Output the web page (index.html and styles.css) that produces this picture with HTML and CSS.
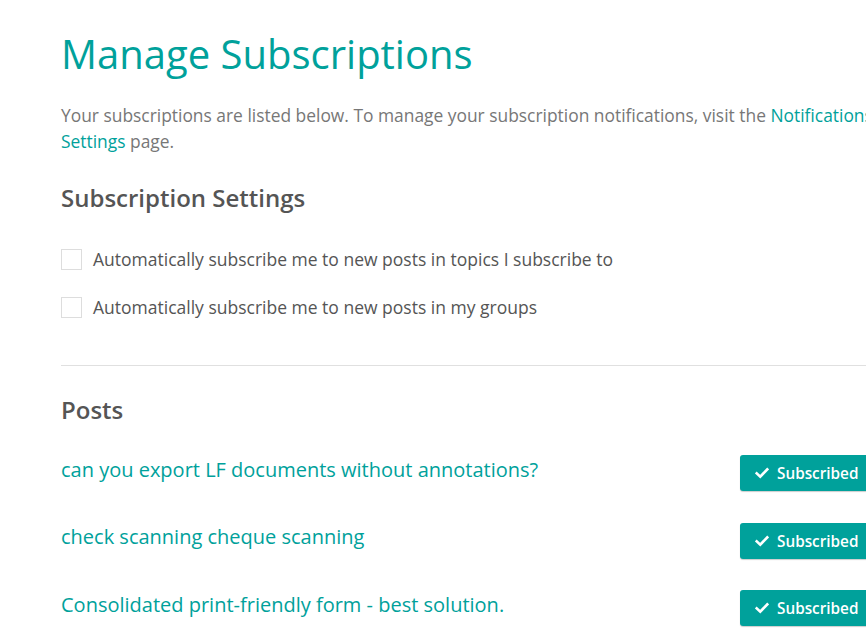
FILE: index.html
```html
<!DOCTYPE html>
<html>
<head>
    <meta charset="UTF-8">
    <title>Manage Subscriptions</title>
    <meta name="viewport" content="width=device-width, initial-scale=1.0">
    <link rel="stylesheet" href="styles.css">
</head>
<body>
    <div class="page">
        <h1 class="title">Manage Subscriptions</h1>
        <p class="intro">Your subscriptions are listed below. To manage your subscription notifications, visit the <a href="#">Notifications Settings</a> page.</p>

        <h2 class="section-title">Subscription Settings</h2>
        <ul class="settings">
            <li><label><input type="checkbox"><span class="box"></span>Automatically subscribe me to new posts in topics I subscribe to</label></li>
            <li><label><input type="checkbox"><span class="box"></span>Automatically subscribe me to new posts in my groups</label></li>
        </ul>

        <hr class="divider">

        <h2 class="section-title posts-title">Posts</h2>
        <ul class="posts">
            <li class="post">
                <a href="#">can you export LF documents without annotations?</a>
                <button class="sub-btn"><svg viewBox="0 0 16 16" width="14" height="14"><path d="M2 8.4 L6 12.2 L14 3.8" fill="none" stroke="#fff" stroke-width="3" stroke-linecap="square"/></svg>Subscribed</button>
            </li>
            <li class="post">
                <a href="#">check scanning cheque scanning</a>
                <button class="sub-btn"><svg viewBox="0 0 16 16" width="14" height="14"><path d="M2 8.4 L6 12.2 L14 3.8" fill="none" stroke="#fff" stroke-width="3" stroke-linecap="square"/></svg>Subscribed</button>
            </li>
            <li class="post">
                <a href="#">Consolidated print-friendly form - best solution.</a>
                <button class="sub-btn"><svg viewBox="0 0 16 16" width="14" height="14"><path d="M2 8.4 L6 12.2 L14 3.8" fill="none" stroke="#fff" stroke-width="3" stroke-linecap="square"/></svg>Subscribed</button>
            </li>
        </ul>
    </div>
</body>
</html>
```

FILE: styles.css
```css
html, body {
    margin: 0;
    overflow: hidden;
}
body {
    background-color: #fff;
    color: #555;
    font-family: "Open Sans", Arial, sans-serif;
}
.page {
    width: 813px;
    padding: 0 0 0 61px;
}
a {
    color: #00a19b;
    text-decoration: none;
}
.title {
    margin: 27px 0 0;
    font-size: 40px;
    font-weight: 400;
    line-height: 54px;
    color: #00a19b;
}
.intro {
    margin: 21px 0 0;
    font-size: 17.4px;
    line-height: 26px;
    color: #777;
}
.section-title {
    margin: 28px 0 0;
    font-size: 24px;
    font-weight: 600;
    line-height: 32px;
    color: #555;
}
.settings {
    list-style: none;
    margin: 29px 0 0;
    padding: 0;
}
.settings li {
    margin-bottom: 16px;
}
.settings label {
    display: flex;
    align-items: center;
    font-size: 17.5px;
    line-height: 32px;
    color: #555;
}
.settings input {
    display: none;
}
.box {
    width: 19px;
    height: 19px;
    border: 1px solid #ddd;
    margin-right: 11px;
}
.divider {
    border: none;
    border-top: 1px solid #e0e0e0;
    margin: 42px 0 0;
}
.posts-title {
    margin-top: 28px;
}
.posts-title + .posts {
    margin-top: 29px;
}
.posts {
    list-style: none;
    padding: 0;
}
.post {
    display: flex;
    justify-content: space-between;
    align-items: center;
    height: 36px;
    margin-bottom: 31.5px;
}
.post a {
    font-size: 20px;
    padding-bottom: 8px;
}
.sub-btn {
    display: flex;
    align-items: center;
    gap: 8px;
    height: 36px;
    width: 134px;
    padding: 0 15px;
    background-color: #00a19b;
    color: #fff;
    border: none;
    border-radius: 3px;
    box-shadow: 0 1px 1px rgba(0, 0, 0, 0.2);
    font-family: "Open Sans", Arial, sans-serif;
    font-size: 15.3px;
    font-weight: 600;
}
```
